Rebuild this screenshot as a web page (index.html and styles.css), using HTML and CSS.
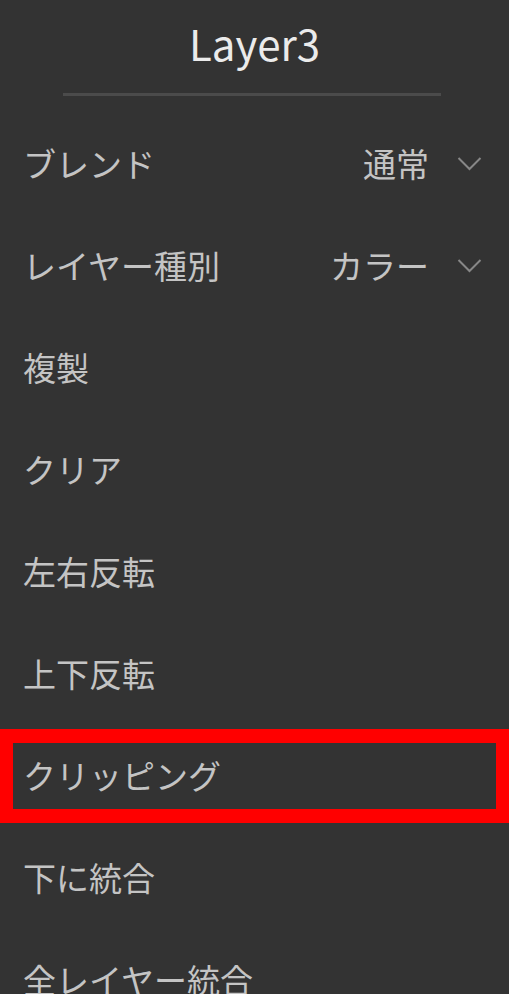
FILE: index.html
```html
<!DOCTYPE html>
<html lang="ja">
<head>
  <meta charset="UTF-8" />
  <meta name="viewport" content="width=device-width, initial-scale=1.0"/>
  <title>Layer3</title>
  <link rel="stylesheet" href="styles.css">
</head>
<body>

  <div class="panel">
    <h2 class="title">Layer3</h2>
    <div class="divider"></div>

    <ul class="menu">
      <li class="row">
        <span class="label">ブレンド</span>
        <span class="value">通常
          <svg class="chevron" width="25" height="15" viewBox="0 0 25 15"><polyline points="1.5,2 12.5,13 23.5,2" /></svg>
        </span>
      </li>
      <li class="row">
        <span class="label">レイヤー種別</span>
        <span class="value">カラー
          <svg class="chevron" width="25" height="15" viewBox="0 0 25 15"><polyline points="1.5,2 12.5,13 23.5,2" /></svg>
        </span>
      </li>
      <li class="row"><span class="label">複製</span></li>
      <li class="row"><span class="label">クリア</span></li>
      <li class="row"><span class="label">左右反転</span></li>
      <li class="row"><span class="label">上下反転</span></li>
      <li class="row marked"><span class="label">クリッピング</span></li>
      <li class="row"><span class="label">下に統合</span></li>
      <li class="row"><span class="label">全レイヤー統合</span></li>
    </ul>
  </div>

</body>
</html>
```

FILE: styles.css
```css
html, body {
  margin: 0;
  background: #333333;
}
body {
  font-family: "Noto Sans CJK JP", "Noto Sans", sans-serif;
  overflow: hidden;
  height: 994px;
}
.title {
  margin: 0;
  height: 93px;
  line-height: 86px;
  text-align: center;
  font-size: 42px;
  font-weight: normal;
  color: #ebebeb;
}
.divider {
  width: 378px;
  height: 3px;
  margin: 0 0 0 63px;
  background: #4b4b4b;
}
.menu {
  list-style: none;
  margin: 16px 0 0 0;
  padding: 0;
}
.row {
  height: 102px;
  display: flex;
  align-items: center;
  justify-content: space-between;
  padding: 0 27px 0 23px;
  font-size: 33px;
  color: #c4c4c4;
}
.value {
  display: flex;
  align-items: center;
  gap: 28px;
}
.chevron polyline {
  fill: none;
  stroke: #878787;
  stroke-width: 2;
}
.marked {
  position: relative;
}
.marked::after {
  content: "";
  position: absolute;
  left: 0;
  right: 0;
  top: 5px;
  bottom: 3px;
  border: 14px solid #ff0000;
  border-left-width: 13px;
  border-right-width: 13px;
}
```
